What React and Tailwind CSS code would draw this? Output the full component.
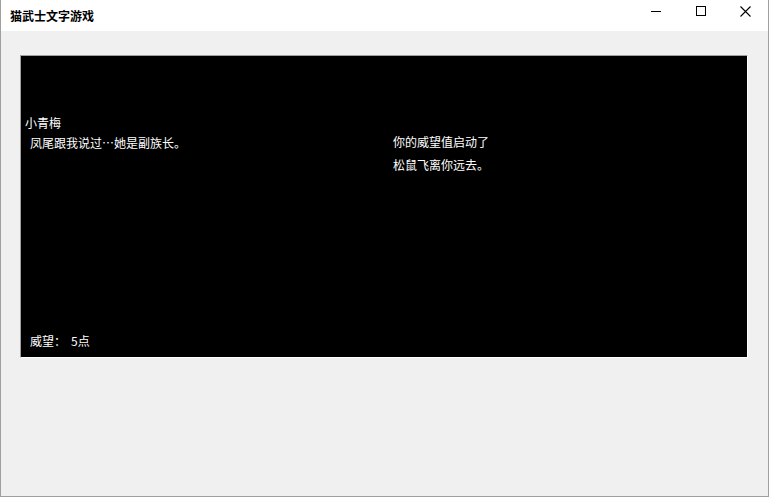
const font = { fontFamily: '"Noto Sans CJK SC", "Noto Sans", sans-serif' };

const TitleBar = () => (
  <div className="flex h-[31px] items-center justify-between bg-white">
    <div className="pl-[9px] text-[12px] font-bold text-black">猫武士文字游戏</div>
    <div className="flex h-full items-start">
      <div className="flex h-[22px] w-[45px] items-center justify-center">
        <svg width="10" height="10" viewBox="0 0 10 10">
          <path d="M0 5.5h10" stroke="#000" strokeWidth="1" />
        </svg>
      </div>
      <div className="flex h-[22px] w-[45px] items-center justify-center">
        <svg width="10" height="10" viewBox="0 0 10 10">
          <rect x="0.5" y="0.5" width="9" height="9" fill="none" stroke="#000" strokeWidth="1" />
        </svg>
      </div>
      <div className="flex h-[22px] w-[45px] items-center justify-center">
        <svg width="11" height="11" viewBox="0 0 11 11">
          <path d="M0.5 0.5l10 10M10.5 0.5l-10 10" stroke="#000" strokeWidth="1.1" />
        </svg>
      </div>
    </div>
  </div>
);

const App = () => {
  return (
    <div className="h-[497px] w-[769px] overflow-hidden border-x border-b border-[#a0a0a0] bg-[#f0f0f0]" style={font}>
      <TitleBar />
      <div className="ml-[19px] mt-[24px] flex h-[303px] w-[728px] flex-col border-l border-t border-r border-b border-l-[#a0a0a0] border-t-[#a0a0a0] border-r-white border-b-white bg-black text-[12px] leading-4 text-white">
        <div className="flex items-start">
          <div className="w-[372px] pl-[4px] pt-[59px]">
            <div className="h-4">小青梅</div>
            <div className="mt-[4px] h-4 pl-[5px]">凤尾跟我说过…她是副族长。</div>
          </div>
          <div className="pt-[78px]">
            <div className="h-4">你的威望值启动了</div>
            <div className="mt-[7px] h-4">松鼠飞离你远去。</div>
          </div>
        </div>
        <div className="mt-auto mb-[8px] flex h-4 pl-[9px]">
          <span>威望：</span>
          <span className="ml-[5px]">5点</span>
        </div>
      </div>
    </div>
  );
};

export default App;
